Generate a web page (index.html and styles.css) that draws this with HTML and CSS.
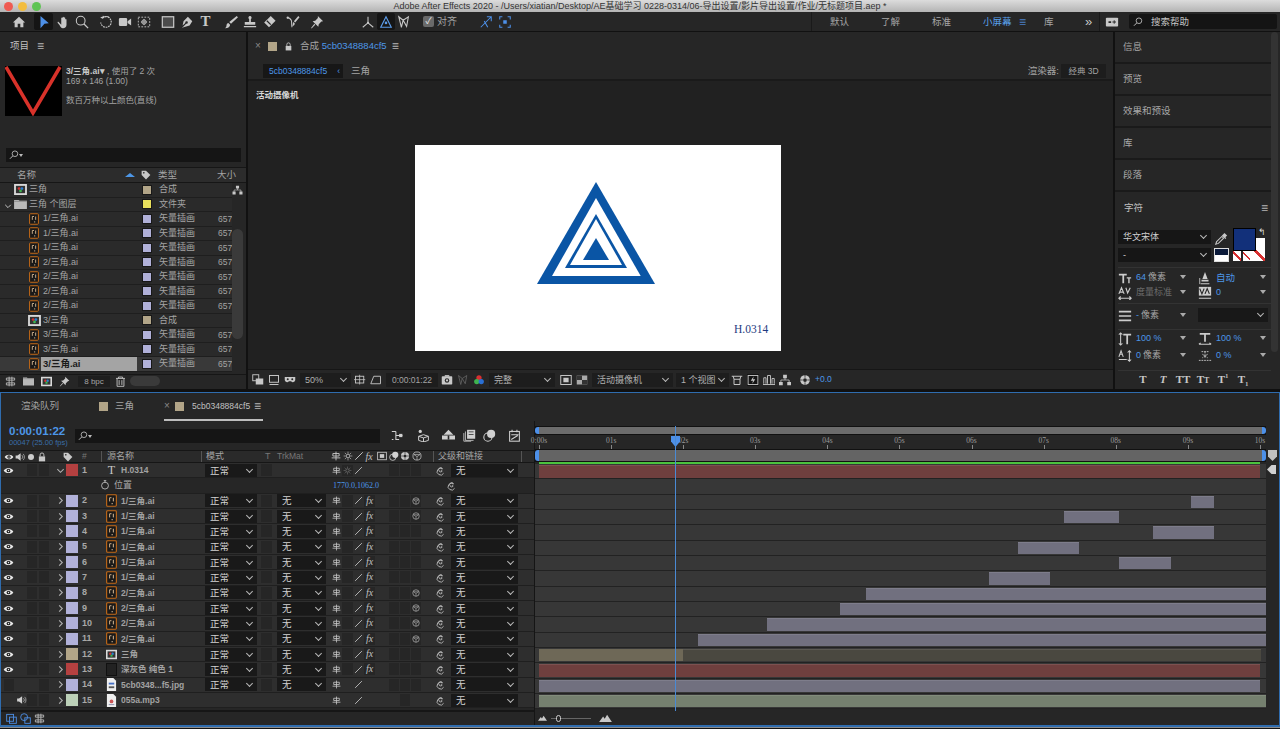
FILE: index.html
```html
<!DOCTYPE html>
<html lang="zh-CN">
<head>
<meta charset="utf-8">
<title>Adobe After Effects 2020</title>
<link rel="stylesheet" href="styles.css">
</head>
<body>
<svg class="defs" aria-hidden="true">
<symbol id="home" viewBox="0 0 16 16"><path fill="currentColor" d="M8 2l7 6.500h-2V14h-3.500v-4h-3v4H3V8.500H1z"/></symbol>
<symbol id="arrow" viewBox="0 0 16 16"><path fill="#4d90e8" d="M4 1l9.500 8.500-5 .5-4.500 5z"/></symbol>
<symbol id="hand" viewBox="0 0 16 16"><path fill="currentColor" d="M3 8l3 3V3.500a.8.800 0 0 1 1.500 0V7V2.500a.8.800 0 0 1 1.500 0V7V3a.8.800 0 0 1 1.500 0v4.500V5a.8.800 0 0 1 1.500 0v6c0 2.500-1.500 4-4 4S5.500 14 4 11.500L2 9c-.5-.8.300-1.600 1-1z"/></symbol>
<symbol id="zoom" viewBox="0 0 16 16"><circle cx="6.500" cy="6.500" r="5" fill="none" stroke="currentColor" stroke-width="1.200"/><path stroke="currentColor" stroke-width="1.500" d="M10 10l5 5"/></symbol>
<symbol id="rot" viewBox="0 0 16 16"><path fill="none" stroke="currentColor" stroke-width="1.300" stroke-dasharray="2 1" d="M4 3.500a6 6 0 1 1-2 5"/><path fill="none" stroke="currentColor" stroke-width="1.300" d="M2 2.500l2 1 1-2.500M4 3.500A6 6 0 0 1 12 3"/></symbol>
<symbol id="cam" viewBox="0 0 16 16"><rect x="1" y="3.500" width="9.500" height="9" rx="1.500" fill="currentColor"/><path fill="currentColor" d="M11 7l4-3v8l-4-3z"/></symbol>
<symbol id="anchor" viewBox="0 0 16 16"><path fill="none" stroke="currentColor" stroke-dasharray="2 1.500" d="M1.500 2.500h13v11h-13z"/><circle cx="8" cy="8" r="2.500" fill="none" stroke="currentColor"/><path stroke="currentColor" d="M8 4.500v7M4.500 8h7"/></symbol>
<symbol id="rect" viewBox="0 0 16 16"><rect x="1.500" y="2" width="13" height="12" fill="#4c4c4c" stroke="currentColor" stroke-width="1.400"/></symbol>
<symbol id="pen" viewBox="0 0 16 16"><path fill="currentColor" d="M9 2l5 5-3 5-7 2-2 1 5-5a1.500 1.500 0 1 0-1-1l-3 3 1-5z"/></symbol>
<symbol id="brush" viewBox="0 0 16 16"><path fill="currentColor" d="M14.500 1L16 2.500 8 10 6 8zM5 9l2 2c0 2-2 4-6 4 2-1 1.500-2 2-4 .3-1 1-2 2-2z"/></symbol>
<symbol id="stamp" viewBox="0 0 16 16"><path fill="currentColor" d="M8 1a2 2 0 0 1 1 3.600V8h5v3H2V8h5V4.600A2 2 0 0 1 8 1zM1 12.500h14V14H1z"/></symbol>
<symbol id="eraser" viewBox="0 0 16 16"><path fill="currentColor" d="M10 1l5.500 5.500L8 14l-5.500-5.500z"/><path fill="#262626" d="M5 7l1-1 4.500 4.500-1 1z"/></symbol>
<symbol id="roto" viewBox="0 0 16 16"><path fill="none" stroke="currentColor" stroke-width="1.200" d="M1 3c2 0 4 1 5 3 1 2 0 6 1 8"/><path fill="currentColor" d="M14 1l1.500 1.500-5 6L9 7zM8.500 8l1.500 1.500c0 2-1 3-3 3 1-1 .5-3 1.500-4.500z"/><circle cx="2" cy="3" r="1.300" fill="currentColor"/></symbol>
<symbol id="pin" viewBox="0 0 16 16"><path fill="currentColor" d="M9 1l6 6-2 .5-3 3-.5 3L3 7l3-.5 3-3zM5 10l1 1-4 4-1 0z"/></symbol>
<symbol id="ax1" viewBox="0 0 16 16"><path fill="none" stroke="currentColor" stroke-width="1.200" d="M8 2v7L2 14M8 9l6 5"/><circle cx="8" cy="9" r="1.300" fill="currentColor"/></symbol>
<symbol id="ax2" viewBox="0 0 16 16"><path fill="none" stroke="#5b9be8" stroke-width="1.300" d="M8 2L2 14h12z"/><circle cx="8" cy="9" r="1.500" fill="#5b9be8"/></symbol>
<symbol id="ax3" viewBox="0 0 16 16"><path fill="none" stroke="currentColor" stroke-width="1.200" d="M2 2l5 4 6-4-2 11-4-7-2 8z"/></symbol>
<symbol id="snap1" viewBox="0 0 16 16"><path fill="none" stroke="#4d90e8" stroke-width="1.200" d="M2 14L14 2M9 2h5v5M6 7l4 7"/></symbol>
<symbol id="snap2" viewBox="0 0 16 16"><path fill="none" stroke="#4d90e8" stroke-width="1.200" d="M2 5V2h3M11 2h3v3M14 11v3h-3M5 14H2v-3"/><rect x="6" y="6" width="4" height="4" fill="#4d90e8"/></symbol>
<symbol id="mag" viewBox="0 0 16 16"><circle cx="9.500" cy="6" r="4.500" fill="none" stroke="currentColor" stroke-width="1.300"/><path stroke="currentColor" stroke-width="1.500" d="M6 9.500L1.500 14"/></symbol>
<symbol id="rpanel" viewBox="0 0 16 16"><rect x="1" y="3" width="14" height="10" rx="1" fill="currentColor"/><path fill="#262626" d="M4 7h3v2H4zM10 6h1v1.500h1.500v1H11V10h-1V8.500H8.500v-1H10z"/></symbol>
<symbol id="ai" viewBox="0 0 12 14"><rect x=".7" y=".7" width="10.600" height="12.600" rx="1" fill="#191919" stroke="#c46a17" stroke-width="1.200"/><path stroke="#e8c8a0" d="M4 8V4l2 0M8 8V4M6 10.500h1.500"/></symbol>
<symbol id="comp" viewBox="0 0 14 12"><rect width="14" height="12" fill="#d9d9d9"/><path fill="#333" d="M2 2h10v8H2z"/><circle cx="5.500" cy="5" r="1.500" fill="#d83030"/><circle cx="8.500" cy="5" r="1.500" fill="#2a7fd4"/><circle cx="7" cy="7.500" r="1.500" fill="#3eb34f"/></symbol>
<symbol id="folder" viewBox="0 0 14 12"><path fill="#b9b9b9" d="M0 1h5l1 1h8v9H0z"/><path fill="#8a8a8a" d="M0 2h14v1H0z"/></symbol>
<symbol id="eye" viewBox="0 0 16 16"><path fill="#e6e6e6" d="M1 8c3-5 11-5 14 0-3 5-11 5-14 0z"/><circle cx="8" cy="8" r="2.700" fill="#222"/><circle cx="8" cy="8" r="1" fill="#e6e6e6"/></symbol>
<symbol id="shy" viewBox="0 0 16 16"><path fill="none" stroke="currentColor" stroke-width="1.400" d="M8 1v14M3 4h10v4H3zM1 11h14"/></symbol>
<symbol id="slash" viewBox="0 0 16 16"><path stroke="currentColor" stroke-width="1.500" d="M2 14L14 2"/></symbol>
<symbol id="cube" viewBox="0 0 16 16"><circle cx="8" cy="8" r="6.500" fill="none" stroke="currentColor" stroke-width="1.200"/><path fill="none" stroke="currentColor" d="M3 5.500h10L8 9zM8 9v5.500"/></symbol>
<symbol id="spiral" viewBox="0 0 16 16"><path fill="none" stroke="currentColor" stroke-width="1.200" d="M8.500 8a1 1 0 1 1 1.500 1.500A3 3 0 1 1 11 5.500 5 5 0 1 0 12.500 12"/></symbol>
<symbol id="doc" viewBox="0 0 12 14"><path fill="#eee" d="M1 0h7l3 3v11H1z"/><path fill="#4671c6" d="M3 5h6v2H3z"/><path fill="#555" d="M3 9h6v2H3z"/></symbol>
<symbol id="mp3" viewBox="0 0 12 14"><path fill="#eee" d="M1 0h7l3 3v11H1z"/><circle cx="6" cy="8" r="2" fill="#c55"/><path fill="#88a" d="M3 11h6v1H3z"/></symbol>
<symbol id="speaker" viewBox="0 0 16 16"><path fill="#d0d0d0" d="M1 5.500h3L9 2v12l-5-3.500H1z"/><path fill="none" stroke="#d0d0d0" d="M11 5a4 4 0 0 1 0 6M13 3a7 7 0 0 1 0 10"/></symbol>
<symbol id="lock" viewBox="0 0 16 16"><rect x="3" y="7" width="10" height="8" fill="currentColor"/><path fill="none" stroke="currentColor" stroke-width="1.500" d="M5 7V4.500a3 3 0 0 1 6 0V7"/></symbol>
<symbol id="trash" viewBox="0 0 16 16"><path fill="none" stroke="currentColor" stroke-width="1.300" d="M1.500 3.500h13M5 3.500V1.500h6v2M3 3.500V15h10V3.500M6 6v7M10 6v7"/></symbol>
<symbol id="tag" viewBox="0 0 16 16"><path fill="currentColor" d="M1 1h7l7 7-7 7-7-7z"/><circle cx="4.500" cy="4.500" r="1.300" fill="#262626"/></symbol>
<symbol id="sun" viewBox="0 0 16 16"><circle cx="8" cy="8" r="3" fill="none" stroke="currentColor" stroke-width="1.300"/><path stroke="currentColor" d="M8 1v3M8 12v3M1 8h3M12 8h3M3 3l2 2M11 11l2 2M13 3l-2 2M5 11l-2 2"/></symbol>
<symbol id="stop" viewBox="0 0 16 16"><circle cx="8" cy="9" r="5.500" fill="none" stroke="currentColor" stroke-width="1.300"/><path stroke="currentColor" stroke-width="1.300" d="M8 1v3M6 1h4"/></symbol>
<symbol id="chevd" viewBox="0 0 10 10"><path fill="none" stroke="currentColor" stroke-width="1.200" d="M1.500 3.500L5 7l3.500-3.500"/></symbol>
<symbol id="chevr" viewBox="0 0 10 10"><path fill="none" stroke="currentColor" stroke-width="1.200" d="M3.500 1.500L7 5 3.500 8.500"/></symbol>
<symbol id="net" viewBox="0 0 16 16"><path fill="currentColor" d="M5.500 1h5v4.500h-5zM0 10.500h5V15H0zM11 10.500h5V15h-5z"/><path fill="none" stroke="currentColor" d="M8 5v3M2.500 11V8h11v3"/></symbol>
<symbol id="grid2" viewBox="0 0 16 16"><rect x="1" y="1" width="8" height="8" fill="none" stroke="currentColor" stroke-width="1.200"/><rect x="5" y="6" width="10" height="8" fill="currentColor"/></symbol>
<symbol id="mon" viewBox="0 0 16 16"><rect x="2" y="2" width="12" height="9" fill="none" stroke="currentColor" stroke-width="1.300"/><path stroke="currentColor" stroke-width="1.300" d="M2 14h12"/></symbol>
<symbol id="mask" viewBox="0 0 16 16"><path fill="currentColor" d="M1 4h14v4a3 3 0 0 1-5.500 1.500h-3A3 3 0 0 1 1 8z"/><circle cx="5" cy="7" r="1.300" fill="#262626"/><circle cx="11" cy="7" r="1.300" fill="#262626"/></symbol>
<symbol id="crop" viewBox="0 0 16 16"><rect x="2" y="3" width="11" height="9" fill="none" stroke="currentColor" stroke-width="1.200"/><path stroke="currentColor" d="M7.500 1v13M0 7.500h15"/></symbol>
<symbol id="trap" viewBox="0 0 16 16"><path fill="none" stroke="currentColor" stroke-width="1.200" d="M5 3h9v10H1z"/></symbol>
<symbol id="snap" viewBox="0 0 16 16"><rect x="1" y="3" width="14" height="11" rx="1" fill="currentColor"/><rect x="5" y="1.500" width="6" height="2" fill="currentColor"/><circle cx="8" cy="8.500" r="3" fill="#262626"/><circle cx="8" cy="8.500" r="1.500" fill="currentColor"/></symbol>
<symbol id="rgb" viewBox="0 0 16 16"><circle cx="8" cy="5" r="3.500" fill="#d83030"/><circle cx="5" cy="10" r="3.500" fill="#3eb34f"/><circle cx="11" cy="10" r="3.500" fill="#2a6fd4"/></symbol>
<symbol id="fr" viewBox="0 0 16 16"><rect x="1" y="2" width="14" height="12" fill="none" stroke="currentColor" stroke-width="1.300"/><rect x="4.500" y="5" width="7" height="6" fill="currentColor"/></symbol>
<symbol id="chk" viewBox="0 0 16 16"><path fill="#aaa" d="M1 2h14v12H1z"/><path fill="#333" d="M1 2h7v6H1zM8 8h7v6H8z"/></symbol>
<symbol id="vw" viewBox="0 0 16 16"><path fill="none" stroke="currentColor" stroke-width="1.300" d="M1 3h14M3 3l1 4h8l1-4M4 14h8M4 7v7M12 7v7"/></symbol>
<symbol id="fast" viewBox="0 0 16 16"><rect x="1.500" y="2" width="13" height="12" fill="none" stroke="currentColor" stroke-width="1.200"/><path fill="currentColor" d="M9 3L5 9h3l-1 4 4-6H8z"/></symbol>
<symbol id="tl" viewBox="0 0 16 16"><path fill="none" stroke="currentColor" stroke-width="1.200" d="M1 13V5h3v8M6 13V2h4v11M12 13V6h3v7M0 14h16"/></symbol>
<symbol id="aper" viewBox="0 0 16 16"><circle cx="8" cy="8" r="6.500" fill="currentColor"/><circle cx="8" cy="8" r="2.500" fill="#262626"/><path stroke="#262626" d="M8 1v4M15 8h-4M8 15v-4M1 8h4"/></symbol>
<symbol id="sw1" viewBox="0 0 16 16"><path fill="none" stroke="#d0d0d0" stroke-width="1.300" d="M1 3h5M6 3v10h4M6 8h8M1 13h2"/><rect x="10" y="6" width="4" height="4" fill="#d0d0d0"/></symbol>
<symbol id="sw2" viewBox="0 0 16 16"><path fill="none" stroke="#d0d0d0" stroke-width="1.200" d="M8 7l6 2v5l-6 2-6-2V9zM2 9l6 2 6-2M8 11v5"/><circle cx="4" cy="3" r="2" fill="#d0d0d0"/></symbol>
<symbol id="sw3" viewBox="0 0 16 16"><path fill="#d0d0d0" d="M8 1l6 6H2zM0 8h16v5H0z"/><rect x="7" y="8" width="2" height="5" fill="#262626"/></symbol>
<symbol id="sw4" viewBox="0 0 16 16"><path fill="#d0d0d0" d="M5 1h10v11H5z"/><path fill="none" stroke="#d0d0d0" d="M3 3v11h10M1 5v10h9"/><path fill="#262626" d="M7 3h6v1H7zM7 6h6v1H7z"/></symbol>
<symbol id="sw5" viewBox="0 0 16 16"><circle cx="10" cy="6" r="5" fill="#d0d0d0"/><circle cx="6" cy="10" r="5" fill="none" stroke="#d0d0d0" stroke-width="1.300"/></symbol>
<symbol id="sw6" viewBox="0 0 16 16"><rect x="2" y="3" width="12" height="12" fill="none" stroke="#d0d0d0" stroke-width="1.300"/><path stroke="#d0d0d0" stroke-width="1.300" d="M5 1v3M11 1v3M4 7h9M4 13l8-5"/></symbol>
<symbol id="mtn" viewBox="0 0 16 10"><path fill="currentColor" d="M0 10l5-7 2 3 3-5 6 9z"/></symbol>
<symbol id="mt2" viewBox="0 0 16 16"><rect x="1" y="2" width="10" height="10" fill="none" stroke="#4d90e8" stroke-width="1.300"/><rect x="5" y="6" width="10" height="9" fill="none" stroke="#4d90e8" stroke-width="1.300"/></symbol>
<symbol id="mt3" viewBox="0 0 16 16"><circle cx="6" cy="6" r="5" fill="none" stroke="#4d90e8" stroke-width="1.300"/><rect x="7" y="7" width="8" height="8" fill="none" stroke="#4d90e8" stroke-width="1.300"/></symbol>
<symbol id="mt4" viewBox="0 0 16 16"><path fill="none" stroke="#bbb" stroke-width="1.300" d="M2 3h12v3H2zM2 10h12v3H2zM6 1v14M10 1v14"/></symbol>
<symbol id="drop" viewBox="0 0 16 16"><path fill="none" stroke="currentColor" stroke-width="1.200" d="M3 11l6-6 2 2-6 6-3 1z"/><path fill="currentColor" d="M10 3l2-2 3 3-2 2 1 1-1 1-4-4 1-1z"/></symbol>
<symbol id="ct1" viewBox="0 0 16 16"><path fill="#ccc" d="M1 3h9v2H7v9H5V5H1zM10 7h5v1.500h-1.700V14h-1.600V8.500H10z"/></symbol>
<symbol id="ct2" viewBox="0 0 16 16"><path fill="#ccc" d="M8 1l3 8H5zM4 10h8v2H4zM3 14h10v1H3z"/><path stroke="#ccc" d="M2 8v7"/></symbol>
<symbol id="ct3" viewBox="0 0 16 16"><path fill="none" stroke="#ccc" stroke-width="1.300" d="M1 9l3-7 3 7M2 7h4M9 2l2 6 3-6M1 14h14M3 12l-2 2 2 2M13 12l2 2-2 2"/></symbol>
<symbol id="ct4" viewBox="0 0 16 16"><rect x="1" y="1" width="14" height="10" fill="#ccc"/><path fill="none" stroke="#222" stroke-width="1.300" d="M2 3l2.500 6L7 3M8 9l2.500-6L13 9"/><path stroke="#ccc" stroke-width="1.200" d="M1 14h14"/></symbol>
<symbol id="ct5" viewBox="0 0 16 16"><path stroke="#ccc" stroke-width="1.800" d="M1 3h14M1 8h14M1 13h14"/></symbol>
<symbol id="ct6" viewBox="0 0 16 16"><path fill="#ccc" d="M6 2h9v2h-3.500v10h-2V4H6z"/><path stroke="#ccc" stroke-width="1.200" d="M3 1v14M1 3l2-2 2 2M1 13l2 2 2-2"/></symbol>
<symbol id="ct7" viewBox="0 0 16 16"><path fill="#ccc" d="M2 1h12v2H9v8H7V3H2z"/><path stroke="#ccc" stroke-width="1.200" d="M1 14h14M1 14l2-1.500M15 14l-2-1.500"/></symbol>
<symbol id="ct8" viewBox="0 0 16 16"><path fill="none" stroke="#ccc" stroke-width="1.200" d="M1 9l2.500-7L6 9M2 6h3M1 12h9M13 2v12M11 4l2-2 2 2M11 12l2 2 2-2"/></symbol>
<symbol id="ct9" viewBox="0 0 16 16"><path fill="none" stroke="#ccc" d="M4 3h8M8 3v7M5 6l6 4M11 6l-6 4M1 13h14" stroke-dasharray="2 1"/></symbol>
</svg>

<div class="app">
<header class="titlebar">
  <span class="lights"><i class="l r"></i><i class="l y"></i><i class="l g"></i></span>
  <span class="title">Adobe After Effects 2020 - /Users/xiatian/Desktop/AE基础学习 0228-0314/06-导出设置/影片导出设置/作业/无标题项目.aep *</span>
</header>

<nav class="toolbar">
  <span class="tool t-home"><svg><use href="#home"/></svg></span>
  <span class="tool on m6"><svg><use href="#arrow"/></svg></span>
  <span class="tool"><svg><use href="#hand"/></svg></span>
  <span class="tool"><svg><use href="#zoom"/></svg></span>
  <span class="tool m5"><svg><use href="#rot"/></svg></span>
  <span class="tool"><svg><use href="#cam"/></svg></span>
  <span class="tool"><svg><use href="#anchor"/></svg></span>
  <span class="tool m5"><svg><use href="#rect"/></svg></span>
  <span class="tool"><svg><use href="#pen"/></svg></span>
  <span class="tool ttext">T</span>
  <span class="tool m6"><svg><use href="#brush"/></svg></span>
  <span class="tool"><svg><use href="#stamp"/></svg></span>
  <span class="tool"><svg><use href="#eraser"/></svg></span>
  <span class="tool m5"><svg><use href="#roto"/></svg></span>
  <span class="tool m5"><svg><use href="#pin"/></svg></span>
  <span class="tool ax m33"><svg><use href="#ax1"/></svg></span>
  <span class="tool ax on"><svg><use href="#ax2"/></svg></span>
  <span class="tool ax"><svg><use href="#ax3"/></svg></span>
  <span class="snapchk"><i class="cb">✓</i>对齐</span>
  <span class="tool snapa"><svg><use href="#snap1"/></svg></span>
  <span class="tool"><svg><use href="#snap2"/></svg></span>
  <span class="flex1"></span>
  <div class="workspaces">
    <span class="ws w1">默认</span><span class="ws w2">了解</span><span class="ws w3">标准</span>
    <span class="ws w4 act">小屏幕</span><span class="menu blue">≡</span><span class="ws w5">库</span>
    <span class="more">»</span>
  </div>
  <span class="tool rp"><svg><use href="#rpanel"/></svg></span>
  <span class="helpbox"><svg><use href="#mag"/></svg>搜索帮助</span>
</nav>

<main class="main">
  <section class="project">
    <div class="phead"><span>项目</span><span class="menu">≡</span></div>
    <div class="pinfo">
      <div class="thumb"><svg viewBox="0 0 57 50"><path fill="none" stroke="#d8322a" stroke-width="3.500" d="M1 1l27 46L55 1"/></svg></div>
      <div class="pmeta"><p class="m1"><b>3/三角.ai▾</b> , 使用了 2 次</p><p>169 x 146 (1.00)</p><p class="m3">数百万种以上颜色(直线)</p></div>
    </div>
    <div class="psearch"><svg><use href="#mag"/></svg><i class="dn"></i></div>
    <div class="pcols"><span class="pc1">名称</span><i class="uptri"></i><svg class="ptag"><use href="#tag"/></svg><span class="pc2">类型</span><span class="pc3">大小</span></div>
    <div class="pbody">
      <div class="plist">
        <div class="prow"><span class="pname"><svg class="ci"><use href="#comp"/></svg>三角</span><i class="lab tan"></i><span class="ptype">合成</span></div>
        <div class="prow"><span class="pname"><svg class="fchev"><use href="#chevd"/></svg><svg class="ci"><use href="#folder"/></svg>三角 个图层</span><i class="lab yel"></i><span class="ptype">文件夹</span></div>
        <div class="prow"><span class="pname in"><svg class="ic"><use href="#ai"/></svg>1/三角.ai</span><i class="lab vec"></i><span class="ptype">矢量插画</span><span class="psize">657</span></div>
        <div class="prow"><span class="pname in"><svg class="ic"><use href="#ai"/></svg>1/三角.ai</span><i class="lab vec"></i><span class="ptype">矢量插画</span><span class="psize">657</span></div>
        <div class="prow"><span class="pname in"><svg class="ic"><use href="#ai"/></svg>1/三角.ai</span><i class="lab vec"></i><span class="ptype">矢量插画</span><span class="psize">657</span></div>
        <div class="prow"><span class="pname in"><svg class="ic"><use href="#ai"/></svg>2/三角.ai</span><i class="lab vec"></i><span class="ptype">矢量插画</span><span class="psize">657</span></div>
        <div class="prow"><span class="pname in"><svg class="ic"><use href="#ai"/></svg>2/三角.ai</span><i class="lab vec"></i><span class="ptype">矢量插画</span><span class="psize">657</span></div>
        <div class="prow"><span class="pname in"><svg class="ic"><use href="#ai"/></svg>2/三角.ai</span><i class="lab vec"></i><span class="ptype">矢量插画</span><span class="psize">657</span></div>
        <div class="prow"><span class="pname in"><svg class="ic"><use href="#ai"/></svg>2/三角.ai</span><i class="lab vec"></i><span class="ptype">矢量插画</span><span class="psize">657</span></div>
        <div class="prow"><span class="pname in"><svg class="ci cin"><use href="#comp"/></svg>3/三角</span><i class="lab tan"></i><span class="ptype">合成</span></div>
        <div class="prow"><span class="pname in"><svg class="ic"><use href="#ai"/></svg>3/三角.ai</span><i class="lab vec"></i><span class="ptype">矢量插画</span><span class="psize">657</span></div>
        <div class="prow"><span class="pname in"><svg class="ic"><use href="#ai"/></svg>3/三角.ai</span><i class="lab vec"></i><span class="ptype">矢量插画</span><span class="psize">657</span></div>
        <div class="prow sel-row"><span class="pname in"><svg class="ic"><use href="#ai"/></svg><b class="edit">3/三角.ai</b></span><i class="lab vec"></i><span class="ptype">矢量插画</span><span class="psize">657</span></div>
      </div>
      <div class="pscroll"><svg class="netic"><use href="#net"/></svg><i class="thumbbar"></i></div>
    </div>
    <div class="pfoot">
      <svg class="fi"><use href="#mt4"/></svg><svg class="fi"><use href="#folder"/></svg><svg class="fi"><use href="#comp"/></svg><svg class="fi"><use href="#pin"/></svg>
      <span class="bpc">8 bpc</span><svg class="fi trash"><use href="#trash"/></svg><i class="pill"></i>
    </div>
  </section>

  <section class="center">
    <div class="ctabs"><span class="x">×</span><i class="swatch tan"></i><svg class="clock"><use href="#lock"/></svg><span class="ctab">合成 <span class="blue">5cb0348884cf5</span></span><span class="menu">≡</span></div>
    <div class="crumbs"><span class="crumb blue">5cb0348884cf5<em>‹</em></span><span class="crumb2">三角</span><span class="flex1"></span><span>渲染器:</span><span class="renderer">经典 3D</span></div>
    <div class="viewer">
      <div class="vlabel">活动摄像机</div>
      <div class="comp">
        <svg viewBox="0 0 366 206"><path fill="#0a55a5" d="M181 37l59 102H122z"/><path fill="#fff" d="M181 53l44.700 78H137z"/><path fill="#0a55a5" d="M181 69l31 54H150z"/><path fill="#fff" d="M181 74l26 46H155z"/><path fill="#0a55a5" d="M181 93l13 22h-26z"/></svg>
        <span class="hmark">H.0314</span>
      </div>
    </div>
    <div class="vbar">
      <svg class="vi a1"><use href="#grid2"/></svg><svg class="vi"><use href="#mon"/></svg><svg class="vi"><use href="#mask"/></svg>
      <span class="vsel v50">50%</span>
      <svg class="vi"><use href="#crop"/></svg><svg class="vi"><use href="#trap"/></svg>
      <span class="vtime">0:00:01:22</span>
      <svg class="vi a3"><use href="#snap"/></svg><svg class="vi dim"><use href="#ax3"/></svg><svg class="vi"><use href="#rgb"/></svg>
      <span class="vsel vq">完整</span>
      <svg class="vi a4"><use href="#fr"/></svg><svg class="vi"><use href="#chk"/></svg>
      <span class="vsel vc">活动摄像机</span><span class="vsel vv">1 个视图</span>
      <svg class="vi a5"><use href="#vw"/></svg><svg class="vi on"><use href="#fast"/></svg><svg class="vi"><use href="#tl"/></svg><svg class="vi"><use href="#net"/></svg>
      <svg class="vi a6"><use href="#aper"/></svg><span class="blue exp">+0.0</span>
    </div>
  </section>

  <aside class="right">
    <div class="rlist">
      <div class="rrow">信息</div><div class="rrow">预览</div><div class="rrow">效果和预设</div><div class="rrow">库</div><div class="rrow">段落</div>
      <div class="char">
        <div class="charhead"><span>字符</span><span class="menu">≡</span></div>
        <div class="fontrow">
          <div class="fontsel"><span class="fs f1">华文宋体</span><span class="fs f2">-</span></div>
          <svg class="dropper"><use href="#drop"/></svg>
          <div class="swatches">
            <i class="mini"></i>
            <i class="stroke"></i><i class="nostroke n1"></i><i class="nostroke n2"></i><i class="fill"></i><span class="swap">↰</span>
          </div>
        </div>
        <div class="cgrid g1">
          <div class="cc"><svg><use href="#ct1"/></svg><span class="blue">64</span> 像素<i class="tri"></i></div>
          <div class="cc"><svg><use href="#ct2"/></svg><span class="blue big">自动</span><i class="tri"></i></div>
          <div class="cc off"><svg><use href="#ct3"/></svg>度量标准<i class="tri"></i></div>
          <div class="cc"><svg><use href="#ct4"/></svg><span class="blue">0</span><i class="tri"></i></div>
        </div>
        <div class="cgrid g2">
          <div class="cc"><svg><use href="#ct5"/></svg><span class="blue">-</span> 像素<i class="tri"></i></div>
          <div class="ccsel"></div>
        </div>
        <div class="cgrid g3">
          <div class="cc"><svg><use href="#ct6"/></svg><span class="blue">100 %</span><i class="tri"></i></div>
          <div class="cc"><svg><use href="#ct7"/></svg><span class="blue">100 %</span><i class="tri"></i></div>
          <div class="cc"><svg><use href="#ct8"/></svg><span class="blue">0</span> 像素<i class="tri"></i></div>
          <div class="cc"><svg><use href="#ct9"/></svg><span class="blue">0 %</span><i class="tri"></i></div>
        </div>
        <div class="tstyles"><span>T</span><span class="ital">T</span><span>TT</span><span>T<small>T</small></span><span>T<sup>1</sup></span><span>T<sub>1</sub></span></div>
      </div>
    </div>
    <div class="rscroll"><i></i></div>
  </aside>
</main>

<section class="timeline">
  <div class="ttabs">
    <span class="tt t0">渲染队列</span>
    <i class="swatch tan t1"></i><span class="tt t1b">三角</span>
    <span class="tt-act"><span class="x">×</span><i class="swatch tan"></i><span class="tt t2">5cb0348884cf5</span><span class="menu">≡</span></span>
  </div>
  <div class="tbody">
    <div class="tleft">
      <div class="tctrl">
        <div class="ttime"><b>0:00:01:22</b><span>00047 (25.00 fps)</span></div>
        <div class="tsearch"><svg><use href="#mag"/></svg><i class="dn"></i></div>
        <div class="ticons"><svg><use href="#sw1"/></svg><svg><use href="#sw2"/></svg><svg><use href="#sw3"/></svg><svg><use href="#sw4"/></svg><svg><use href="#sw5"/></svg><svg><use href="#sw6"/></svg></div>
      </div>
      <div class="thead">
        <span class="h eye"><svg><use href="#eye"/></svg></span><span class="h au"><svg><use href="#speaker"/></svg></span><span class="h so"><i class="dot"></i></span><span class="h lo"><svg><use href="#lock"/></svg></span>
        <span class="h tg"><svg><use href="#tag"/></svg></span><span class="h ha">#</span><span class="h hn">源名称</span><span class="h hm">模式</span><span class="h ht">T</span><span class="h hk">TrkMat</span>
        <span class="h hs"><svg><use href="#shy"/></svg><svg><use href="#sun"/></svg><svg><use href="#slash"/></svg><em class="fx">fx</em><svg><use href="#fr"/></svg><svg><use href="#sw5"/></svg><svg><use href="#aper"/></svg><svg><use href="#cube"/></svg></span>
        <span class="h hp">父级和链接</span>
      </div>

      <div class="lay top"><span class="c1"><svg><use href="#eye"/></svg></span><i class="c2"></i><i class="bx"></i><i class="bx"></i><svg class="chev"><use href="#chevd"/></svg><i class="lb red"></i><b class="num">1</b><span class="src tglyph">T</span><span class="nm">H.0314</span><span class="sel md">正常</span><i class="tb"></i><span class="trk"></span><span class="sws"><svg class="s on"><use href="#shy"/></svg><svg class="s on dimg"><use href="#sun"/></svg><svg class="s"><use href="#slash"/></svg><i class="s"></i></span><span class="bxs"><i class="bx"></i><i class="bx"></i><i class="bx"></i></span><svg class="sp"><use href="#spiral"/></svg><span class="sel pr">无</span></div>
      <div class="lay sub"><svg class="stp"><use href="#stop"/></svg><span class="subn">位置</span><span class="subv">1770.0,1062.0</span><svg class="sp2"><use href="#spiral"/></svg></div>

      <div class="lay"><span class="c1"><svg><use href="#eye"/></svg></span><i class="c2"></i><i class="bx"></i><i class="bx"></i><svg class="chev"><use href="#chevr"/></svg><i class="lb vec"></i><b class="num">2</b><svg class="src"><use href="#ai"/></svg><span class="nm">1/三角.ai</span><span class="sel md">正常</span><i class="tb"></i><span class="sel trk">无</span><span class="sws"><svg class="s on"><use href="#shy"/></svg><i class="s bg"></i><svg class="s"><use href="#slash"/></svg><em class="s fx">fx</em></span><span class="bxs"><i class="bx"></i><i class="bx"></i><svg class="bx"><use href="#cube"/></svg></span><svg class="sp"><use href="#spiral"/></svg><span class="sel pr">无</span></div>
      <div class="lay"><span class="c1"><svg><use href="#eye"/></svg></span><i class="c2"></i><i class="bx"></i><i class="bx"></i><svg class="chev"><use href="#chevr"/></svg><i class="lb vec"></i><b class="num">3</b><svg class="src"><use href="#ai"/></svg><span class="nm">1/三角.ai</span><span class="sel md">正常</span><i class="tb"></i><span class="sel trk">无</span><span class="sws"><svg class="s on"><use href="#shy"/></svg><i class="s bg"></i><svg class="s"><use href="#slash"/></svg><em class="s fx">fx</em></span><span class="bxs"><i class="bx"></i><i class="bx"></i><svg class="bx"><use href="#cube"/></svg></span><svg class="sp"><use href="#spiral"/></svg><span class="sel pr">无</span></div>
      <div class="lay"><span class="c1"><svg><use href="#eye"/></svg></span><i class="c2"></i><i class="bx"></i><i class="bx"></i><svg class="chev"><use href="#chevr"/></svg><i class="lb vec"></i><b class="num">4</b><svg class="src"><use href="#ai"/></svg><span class="nm">1/三角.ai</span><span class="sel md">正常</span><i class="tb"></i><span class="sel trk">无</span><span class="sws"><svg class="s on"><use href="#shy"/></svg><i class="s bg"></i><svg class="s"><use href="#slash"/></svg><em class="s fx">fx</em></span><span class="bxs"><i class="bx"></i><i class="bx"></i><i class="bx"></i></span><svg class="sp"><use href="#spiral"/></svg><span class="sel pr">无</span></div>
      <div class="lay"><span class="c1"><svg><use href="#eye"/></svg></span><i class="c2"></i><i class="bx"></i><i class="bx"></i><svg class="chev"><use href="#chevr"/></svg><i class="lb vec"></i><b class="num">5</b><svg class="src"><use href="#ai"/></svg><span class="nm">1/三角.ai</span><span class="sel md">正常</span><i class="tb"></i><span class="sel trk">无</span><span class="sws"><svg class="s on"><use href="#shy"/></svg><i class="s bg"></i><svg class="s"><use href="#slash"/></svg><em class="s fx">fx</em></span><span class="bxs"><i class="bx"></i><i class="bx"></i><i class="bx"></i></span><svg class="sp"><use href="#spiral"/></svg><span class="sel pr">无</span></div>
      <div class="lay"><span class="c1"><svg><use href="#eye"/></svg></span><i class="c2"></i><i class="bx"></i><i class="bx"></i><svg class="chev"><use href="#chevr"/></svg><i class="lb vec"></i><b class="num">6</b><svg class="src"><use href="#ai"/></svg><span class="nm">1/三角.ai</span><span class="sel md">正常</span><i class="tb"></i><span class="sel trk">无</span><span class="sws"><svg class="s on"><use href="#shy"/></svg><i class="s bg"></i><svg class="s"><use href="#slash"/></svg><em class="s fx">fx</em></span><span class="bxs"><i class="bx"></i><i class="bx"></i><i class="bx"></i></span><svg class="sp"><use href="#spiral"/></svg><span class="sel pr">无</span></div>
      <div class="lay"><span class="c1"><svg><use href="#eye"/></svg></span><i class="c2"></i><i class="bx"></i><i class="bx"></i><svg class="chev"><use href="#chevr"/></svg><i class="lb vec"></i><b class="num">7</b><svg class="src"><use href="#ai"/></svg><span class="nm">1/三角.ai</span><span class="sel md">正常</span><i class="tb"></i><span class="sel trk">无</span><span class="sws"><svg class="s on"><use href="#shy"/></svg><i class="s bg"></i><svg class="s"><use href="#slash"/></svg><em class="s fx">fx</em></span><span class="bxs"><i class="bx"></i><i class="bx"></i><i class="bx"></i></span><svg class="sp"><use href="#spiral"/></svg><span class="sel pr">无</span></div>
      <div class="lay"><span class="c1"><svg><use href="#eye"/></svg></span><i class="c2"></i><i class="bx"></i><i class="bx"></i><svg class="chev"><use href="#chevr"/></svg><i class="lb vec"></i><b class="num">8</b><svg class="src"><use href="#ai"/></svg><span class="nm">2/三角.ai</span><span class="sel md">正常</span><i class="tb"></i><span class="sel trk">无</span><span class="sws"><svg class="s on"><use href="#shy"/></svg><i class="s bg"></i><svg class="s"><use href="#slash"/></svg><em class="s fx">fx</em></span><span class="bxs"><i class="bx"></i><i class="bx"></i><svg class="bx"><use href="#cube"/></svg></span><svg class="sp"><use href="#spiral"/></svg><span class="sel pr">无</span></div>
      <div class="lay"><span class="c1"><svg><use href="#eye"/></svg></span><i class="c2"></i><i class="bx"></i><i class="bx"></i><svg class="chev"><use href="#chevr"/></svg><i class="lb vec"></i><b class="num">9</b><svg class="src"><use href="#ai"/></svg><span class="nm">2/三角.ai</span><span class="sel md">正常</span><i class="tb"></i><span class="sel trk">无</span><span class="sws"><svg class="s on"><use href="#shy"/></svg><i class="s bg"></i><svg class="s"><use href="#slash"/></svg><em class="s fx">fx</em></span><span class="bxs"><i class="bx"></i><i class="bx"></i><svg class="bx"><use href="#cube"/></svg></span><svg class="sp"><use href="#spiral"/></svg><span class="sel pr">无</span></div>
      <div class="lay"><span class="c1"><svg><use href="#eye"/></svg></span><i class="c2"></i><i class="bx"></i><i class="bx"></i><svg class="chev"><use href="#chevr"/></svg><i class="lb vec"></i><b class="num">10</b><svg class="src"><use href="#ai"/></svg><span class="nm">2/三角.ai</span><span class="sel md">正常</span><i class="tb"></i><span class="sel trk">无</span><span class="sws"><svg class="s on"><use href="#shy"/></svg><i class="s bg"></i><svg class="s"><use href="#slash"/></svg><em class="s fx">fx</em></span><span class="bxs"><i class="bx"></i><i class="bx"></i><svg class="bx"><use href="#cube"/></svg></span><svg class="sp"><use href="#spiral"/></svg><span class="sel pr">无</span></div>
      <div class="lay"><span class="c1"><svg><use href="#eye"/></svg></span><i class="c2"></i><i class="bx"></i><i class="bx"></i><svg class="chev"><use href="#chevr"/></svg><i class="lb vec"></i><b class="num">11</b><svg class="src"><use href="#ai"/></svg><span class="nm">2/三角.ai</span><span class="sel md">正常</span><i class="tb"></i><span class="sel trk">无</span><span class="sws"><svg class="s on"><use href="#shy"/></svg><i class="s bg"></i><svg class="s"><use href="#slash"/></svg><em class="s fx">fx</em></span><span class="bxs"><i class="bx"></i><i class="bx"></i><svg class="bx"><use href="#cube"/></svg></span><svg class="sp"><use href="#spiral"/></svg><span class="sel pr">无</span></div>
      <div class="lay"><span class="c1"><svg><use href="#eye"/></svg></span><i class="c2"></i><i class="bx"></i><i class="bx"></i><svg class="chev"><use href="#chevr"/></svg><i class="lb tan"></i><b class="num">12</b><svg class="src"><use href="#comp"/></svg><span class="nm">三角</span><span class="sel md">正常</span><i class="tb"></i><span class="sel trk">无</span><span class="sws"><svg class="s on"><use href="#shy"/></svg><i class="s bg"></i><svg class="s"><use href="#slash"/></svg><em class="s fx">fx</em></span><span class="bxs"><i class="bx"></i><i class="bx"></i><i class="bx"></i></span><svg class="sp"><use href="#spiral"/></svg><span class="sel pr">无</span></div>
      <div class="lay"><span class="c1"><svg><use href="#eye"/></svg></span><i class="c2"></i><i class="bx"></i><i class="bx"></i><svg class="chev"><use href="#chevr"/></svg><i class="lb red"></i><b class="num">13</b><i class="src solid"></i><span class="nm">深灰色 纯色 1</span><span class="sel md">正常</span><i class="tb"></i><span class="sel trk">无</span><span class="sws"><svg class="s on"><use href="#shy"/></svg><i class="s bg"></i><svg class="s"><use href="#slash"/></svg><em class="s fx">fx</em></span><span class="bxs"><i class="bx"></i><i class="bx"></i><i class="bx"></i></span><svg class="sp"><use href="#spiral"/></svg><span class="sel pr">无</span></div>
      <div class="lay"><i class="c1 bxc"></i><i class="c2"></i><i class="bx hid"></i><i class="bx"></i><svg class="chev"><use href="#chevr"/></svg><i class="lb vec"></i><b class="num">14</b><svg class="src"><use href="#doc"/></svg><span class="nm">5cb0348...f5.jpg</span><span class="sel md">正常</span><i class="tb"></i><span class="sel trk">无</span><span class="sws"><svg class="s on"><use href="#shy"/></svg><i class="s"></i><svg class="s"><use href="#slash"/></svg><i class="s"></i></span><span class="bxs"><i class="bx"></i><i class="bx"></i><i class="bx"></i></span><svg class="sp"><use href="#spiral"/></svg><span class="sel pr">无</span></div>
      <div class="lay"><i class="c1"></i><svg class="c2 spk"><use href="#speaker"/></svg><i class="bx"></i><i class="bx"></i><svg class="chev"><use href="#chevr"/></svg><i class="lb grn"></i><b class="num">15</b><svg class="src"><use href="#mp3"/></svg><span class="nm">055a.mp3</span><i class="md"></i><i class="tb hid"></i><span class="trk"></span><span class="sws"><svg class="s on"><use href="#shy"/></svg><i class="s"></i><svg class="s"><use href="#slash"/></svg><i class="s"></i></span><span class="bxs"><i class="bx hid"></i><i class="bx"></i><i class="bx hid"></i></span><svg class="sp"><use href="#spiral"/></svg><span class="sel pr">无</span></div>

      <div class="tfoot"><svg><use href="#mt2"/></svg><svg><use href="#mt3"/></svg><svg><use href="#mt4"/></svg></div>
    </div>

    <div class="tright">
      <div class="nav"><i class="cap"></i><i class="navline"></i><i class="cap"></i></div>
      <div class="ruler">
        <span class="mk"><b>0:00s</b></span><span class="mk"><b>01s</b></span><span class="mk"><b>02s</b></span><span class="mk"><b>03s</b></span><span class="mk"><b>04s</b></span><span class="mk"><b>05s</b></span><span class="mk"><b>06s</b></span><span class="mk"><b>07s</b></span><span class="mk"><b>08s</b></span><span class="mk"><b>09s</b></span><span class="mk"><b>10s</b></span>
      </div>
      <div class="work"><i class="cap"></i><i class="workfill"></i><i class="cap"></i><i class="shield"></i></div>
      <div class="green"></div>
      <div class="tracks">
        <div class="trackrow"><div class="bar c-red" style="margin-left:4px;width:721px"></div></div>
        <div class="trackrow"></div>
        <div class="trackrow"><div class="bar c-vec" style="margin-left:656px;width:23px"></div></div>
        <div class="trackrow"><div class="bar c-vec" style="margin-left:529px;width:55px"></div></div>
        <div class="trackrow"><div class="bar c-vec" style="margin-left:618px;width:61px"></div></div>
        <div class="trackrow"><div class="bar c-vec" style="margin-left:483px;width:61px"></div></div>
        <div class="trackrow"><div class="bar c-vec" style="margin-left:584px;width:52px"></div></div>
        <div class="trackrow"><div class="bar c-vec" style="margin-left:454px;width:61px"></div></div>
        <div class="trackrow"><div class="bar c-vec" style="margin-left:331px;width:400px"></div></div>
        <div class="trackrow"><div class="bar c-vec" style="margin-left:305px;width:426px"></div></div>
        <div class="trackrow"><div class="bar c-vec" style="margin-left:232px;width:499px"></div></div>
        <div class="trackrow"><div class="bar c-vec" style="margin-left:163px;width:568px"></div></div>
        <div class="trackrow"><div class="bar c-tan" style="margin-left:4px;width:722px"><div class="barhi" style="width:144px"></div></div></div>
        <div class="trackrow"><div class="bar c-red" style="margin-left:4px;width:721px"></div></div>
        <div class="trackrow"><div class="bar c-vec" style="margin-left:4px;width:721px"></div></div>
        <div class="trackrow"><div class="bar c-grn" style="margin-left:4px;width:727px"></div></div>
      </div>
      <div class="zoombar"><svg class="mt1"><use href="#mtn"/></svg><i class="slider"><i></i></i><svg class="mt2"><use href="#mtn"/></svg></div>
      <i class="phead-mark"></i><i class="pline"></i><i class="side-ic"></i>
    </div>
  </div>
</section>
</div>
</body>
</html>
```

FILE: styles.css
```css
*{box-sizing:border-box}
html,body{margin:0;padding:0;height:729px;overflow:hidden;background:#101010}
body{font:9px/1.2 "Liberation Sans","Noto Sans CJK SC",sans-serif;color:#a4a4a4}
p{margin:0}
i,em,b{font-style:normal;display:block}
.defs{position:absolute;width:0;height:0}
svg{display:block;flex:none;color:#c8c8c8}
.blue{color:#4d97e8}
.menu{font-size:12px;color:#b5b5b5;line-height:1}
.flex1{flex:1}
.app{width:1280px;height:729px;display:flex;flex-direction:column;background:linear-gradient(#101010 727px,#8a8a8a 727px,#8a8a8a 728px,#101010 728px)}

.titlebar{height:12px;flex:none;background:linear-gradient(#dcdcdc,#b4b4b4);display:flex;align-items:center;justify-content:center;position:relative;color:#333;overflow:hidden}
.lights{position:absolute;left:4px;top:2px;display:flex;gap:5px}
.l{width:9px;height:9px;border-radius:50%}
.l.r{background:#ef5b52}.l.y{background:#f3bd3f}.l.g{background:#5fc454}
.title{font-size:9px;white-space:nowrap;line-height:12px}

.toolbar{height:20px;flex:none;display:flex;align-items:center;background:#262626;padding-left:9px;border-bottom:1px solid #111}
.tool{width:19px;height:17px;display:flex;align-items:center;justify-content:center;flex:none}
.tool svg{width:14px;height:14px}
.tool.on{background:#151515;border-radius:2px}
.m5{margin-left:5px}.m6{margin-left:6px}.m33{margin-left:33px}
.ax{width:18px}
.ttext{font:bold 15px "Liberation Serif",serif;color:#c8c8c8}
.snapchk{display:flex;align-items:center;gap:3px;margin-left:10px;font-size:10px;width:41px}
.cb{width:11px;height:11px;background:#6a6a6a;border-radius:2px;color:#e8e8e8;font-size:9px;line-height:11px;text-align:center}
.snapa{margin-left:12px}
.workspaces{display:flex;align-items:center;height:19px;border-left:1px solid #1a1a1a;width:289px;padding-left:18px;font-size:9.500px;color:#a6a6a6;border-right:1px solid #1a1a1a}
.ws.w1,.ws.w2,.ws.w3{width:51px}
.ws.w4{width:36px;color:#5aa2ee}
.menu.blue{color:#4a7fc4;width:25px}
.ws.w5{width:41px}
.more{font-size:13px;line-height:14px;color:#c8c8c8}
.rp{width:24px}
.helpbox{display:flex;align-items:center;width:148px;height:15px;background:#141414;margin:0 3px 0 5px;gap:8px;padding-left:4px;color:#c4c4c4;font-size:9.500px;border-radius:2px}
.helpbox svg{width:10px;height:10px}

.main{height:357px;flex:none;display:flex;gap:2px;background:#111}
.project{width:246px;flex:none;background:#262626;display:flex;flex-direction:column}
.phead{height:28px;flex:none;display:flex;align-items:center;gap:8px;padding-left:10px;color:#c0c0c0;font-size:9.500px}
.pinfo{display:flex;margin:6px 0 0 5px;height:50px;flex:none}
.thumb{width:57px;height:50px;background:#000}
.thumb svg{width:57px;height:50px}
.pmeta{margin-left:4px;font-size:8.500px;line-height:10px}
.m1 b{display:inline;color:#c8c8c8}
.m3{margin-top:9px}
.psearch{margin:32px 5px 0 6px;height:14px;background:#151515;flex:none;display:flex;align-items:center;padding-left:3px}
.psearch svg,.tsearch svg{width:10px;height:10px}
.dn{width:0;height:0;border:2px solid transparent;border-top:3px solid #bbb;margin-top:3px}
.pcols{height:16px;margin-top:5px;flex:none;display:flex;align-items:center;background:#2c2c2c;border-top:1px solid #161616;border-bottom:1px solid #161616;font-size:9.500px}
.pc1{margin-left:17px;width:108px}
.uptri{width:0;height:0;border:5px solid transparent;border-top:0;border-bottom:4px solid #4d97e8;flex:none}
.ptag{width:10px;height:10px;margin-left:6px}
.pc2{margin-left:7px;width:59px}
.pbody{flex:1;display:flex;min-height:0;overflow:hidden}
.plist{width:232px;flex:none}
.prow{height:14.500px;display:flex;align-items:center;background:#2a2a2a;border-bottom:1px solid #1e1e1e}
.pname{width:142px;flex:none;display:flex;align-items:center;padding-left:14px;white-space:nowrap;position:relative}
.pname.in{padding-left:29px}
.ci{width:13px;height:11px;margin-right:2px}
.cin{margin-left:-1px}
.ic{width:10px;height:12px;margin-right:4px}
.fchev{width:8px;height:8px;position:absolute;left:4px;top:3px}
.lab{width:8px;height:8px;flex:none;border:1px solid #181818;box-sizing:content-box}
.lab.tan{background:#b2a588}.lab.yel{background:#e8df5c}.lab.vec{background:#b1b1d9}
.ptype{margin-left:7px;width:59px;flex:none}
.psize{font-size:8.500px}
.sel-row{background:#393939}
.edit{background:#a4a4a4;color:#1a1a1a;width:96px;height:14px;line-height:14px;padding-left:2px;margin-left:-2px;font-size:9.500px}
.pscroll{flex:1;background:#262626;padding-top:1px}
.netic{width:11px;height:10px;margin-top:1px}
.thumbbar{width:11px;height:110px;background:#3a3a3a;border-radius:6px;margin-top:34px}
.pfoot{height:15px;flex:none;display:flex;align-items:center;padding:0 0 2px 5px;gap:7px;background:#262626;border-top:1px solid #161616}
.fi{width:11px;height:11px}
.bpc{background:#1e1e1e;width:32px;text-align:center;margin-left:1px;font-size:8px;line-height:11px}
.trash{margin-left:-2px}
.pill{width:30px;height:10px;border-radius:6px;background:#3a3a3a;margin-left:-3px}

.center{width:865px;flex:none;background:#262626;display:flex;flex-direction:column}
.ctabs{height:30px;flex:none;display:flex;align-items:center;padding:0 0 2px 7px;font-size:9.500px}
.x{color:#888;font-size:10px;width:8px}
.swatch{width:9px;height:9px;flex:none}
.swatch.tan{background:#b2a588}
.ctabs .swatch{margin-left:5px}
.clock{width:9px;height:9px;margin-left:7px}
.ctab{margin-left:7px;margin-right:5px}
.crumbs{height:19px;flex:none;display:flex;align-items:center;padding:0 7px 0 15px;border-bottom:2px solid #1a1a1a;font-size:9.500px}
.crumb{background:#171717;width:80px;height:14px;line-height:14px;padding:0 3px 0 6px;display:flex;justify-content:space-between;font-size:8.500px}
.crumb2{margin-left:8px}
.renderer{background:#1d1d1d;margin-left:2px;width:45px;height:14px;line-height:14px;text-align:center;font-size:8.500px}
.viewer{flex:1;background:#212121;min-height:0;position:relative;padding-top:9px}
.vlabel{margin-left:8px;color:#d8d8d8;font-weight:bold;font-size:8.500px;height:10px;line-height:10px}
.comp{width:366px;height:206px;background:#fff;margin:45px 0 0 167px;position:relative}
.comp svg{width:366px;height:206px}
.hmark{position:absolute;left:319px;top:178px;font:11.500px "Liberation Serif",serif;color:#1e3a80}
.vbar{height:20px;flex:none;display:flex;align-items:center;background:#262626;border-top:1px solid #161616;padding-left:1px}
.vi{width:12px;height:12px;margin-right:4px}
.vi.a1{margin-left:3px}
.vi.a3{margin-left:1px}
.vi.a4{margin-left:5px}
.vi.a5{margin-left:2px}
.vi.a6{margin-left:4px}
.vi.on{background:#141414}
.vi.dim{opacity:.35}
.vsel{background:#1d1d1d;height:14px;line-height:14px;padding-left:5px;position:relative;font-size:9px;flex:none;color:#b0b0b0}
.vsel::after,.sel::after,.ccsel::after{content:"";position:absolute;right:5px;top:3px;width:4px;height:4px;border-right:1px solid #b8b8b8;border-bottom:1px solid #b8b8b8;transform:rotate(45deg)}
.v50{width:51px;margin-right:3px}
.vtime{background:#1d1d1d;width:52px;height:14px;line-height:14px;text-align:center;margin-right:2px;font-size:8.500px}
.vq{width:66px}
.vc{width:81px}
.vv{width:53px;margin-left:3px}
.exp{font-size:8.500px}

.right{flex:1;background:#262626;display:flex;min-width:0}
.rlist{width:156px;flex:none;display:flex;flex-direction:column}
.rrow{height:32px;line-height:30px;padding-left:8px;border-bottom:2px solid #1a1a1a;font-size:9.500px;flex:none;color:#a8a8a8}
.rscroll{flex:1;padding-right:3px}
.rscroll i{width:7px;height:320px;background:#333;border-radius:4px}
.char{flex:1;padding-left:3px;min-height:0}
.charhead{height:32px;display:flex;align-items:center;justify-content:space-between;padding:0 3px 0 6px;color:#c0c0c0;font-size:9.500px}
.fontrow{display:flex;height:35px;margin-top:6px}
.fontsel{width:93px;display:flex;flex-direction:column;gap:4px}
.fs{height:14px;background:#161616;line-height:14px;padding-left:5px;color:#d0d0d0;position:relative;font-size:9px}
.fs::after{content:"";position:absolute;right:5px;top:3px;width:4px;height:4px;border-right:1px solid #bbb;border-bottom:1px solid #bbb;transform:rotate(45deg)}
.dropper{width:14px;height:14px;margin:2px 0 0 3px}
.swatches{position:relative;width:36px;height:34px;margin-left:5px;top:-2px}
.mini{position:absolute;left:-19px;top:20px;width:15px;height:14px;background:linear-gradient(#0b1a3a 50%,#fff 50%);border:1px solid #ddd}
.fill{position:absolute;left:0;top:0;width:23px;height:23px;background:#12307a;border:1px solid #000}
.stroke{position:absolute;left:10px;top:10px;width:22px;height:23px;background:linear-gradient(135deg,#fff 0 46%,#d83030 46% 54%,#fff 54%);transform:scaleX(-1)}
.nostroke{position:absolute;top:23px;height:10px;background:linear-gradient(135deg,#fff 0 44%,#d83030 44% 56%,#fff 56%);transform:scaleX(-1)}
.n1{left:0;width:8px}
.n2{left:10px;width:7px}
.swap{position:absolute;left:25px;top:-1px;color:#ddd;font-size:9px}
.cgrid{display:grid;grid-template-columns:80px 70px;align-content:start;border-top:1px solid #333;font-size:9px}
.g1{margin-top:2px;padding-top:2px;height:36px}
.g2{height:26px;padding-top:4px}
.g3{height:41px;padding-top:1px;row-gap:2px}
.cc{display:flex;align-items:center;height:15px;gap:2px;position:relative;white-space:nowrap}
.cc svg{width:14px;height:14px;margin-right:2px}
.cc.off{color:#6c6c6c}
.big{font-size:9.500px}
.tri{position:absolute;right:12px;top:5px;width:0;height:0;border:3px solid transparent;border-top:4px solid #aaa;border-bottom:0}
.cgrid .cc:nth-child(2n) .tri{right:2px}
.ccsel{height:14px;background:#181818;position:relative}
.tstyles{display:flex;border-top:1px solid #333;padding:2px 0 0 15px;font:bold 11px "Liberation Serif",serif;color:#c8c8c8}
.tstyles span{width:20px;flex:none;text-align:center}
.tstyles .ital{font-style:italic}
.tstyles small{font-size:8px}
.tstyles sup,.tstyles sub{font-size:6px;line-height:0}

.timeline{height:335px;flex:none;margin-top:3px;background:#262626;border:1px solid #2f6cae;border-bottom:2px solid #2f6cae;display:flex;flex-direction:column;overflow:hidden}
.ttabs{height:28px;flex:none;display:flex;align-items:center;font-size:9.500px;padding-bottom:2px}
.t0{margin-left:20px;width:78px}
.t1{margin-right:7px}
.t1b{width:49px}
.tt-act{display:flex;align-items:center;height:28px;width:99px;border-bottom:2px solid #bdbdbd;gap:2px;margin-bottom:-2px}
.tt-act .swatch{margin:0 6px 0 1px}
.tt-act .t2{font-size:8.500px;width:60px;color:#c0c0c0}
.tbody{flex:1;display:flex;min-height:0}
.tleft{width:533px;flex:none;display:flex;flex-direction:column}
.tctrl{height:29px;flex:none;display:flex;align-items:center;padding-left:8px}
.ttime{width:66px;color:#4d97e8}
.ttime b{font-size:11.500px;line-height:13px}
.ttime span{font-size:7.500px;color:#3a6ea8;display:block;line-height:9px}
.tsearch{width:305px;height:14px;background:#151515;display:flex;align-items:center;padding-left:3px}
.ticons{display:flex;margin-left:11px}
.ticons svg{width:13px;height:13px}
.ticons svg:nth-child(2){margin-left:13px}
.ticons svg:nth-child(3){margin-left:12px}
.ticons svg:nth-child(4){margin-left:8px}
.ticons svg:nth-child(5){margin-left:7px}
.ticons svg:nth-child(6){margin-left:12px}
.thead{height:13px;flex:none;display:flex;align-items:center;background:#2a2a2a;border-top:1px solid #161616;border-bottom:1px solid #161616;font-size:9px}
.h svg{width:10px;height:10px}
.h{display:flex;flex:none}
.h.eye{margin-left:3px;width:11px}.h.au{width:11px}.h.so{width:11px}.h.lo{width:11px}
.h.tg{margin-left:15px;width:19px}.h.ha{width:19px;color:#777;font-size:8.500px}
.h.hn{width:100px;padding-left:5px;border-left:1px solid #555}
.h.hm{width:60px;padding-left:4px;border-left:1px solid #555}
.h.ht{margin-left:4px;width:12px;color:#777}
.h.hk{width:54px;color:#777;font-size:8.500px}
.h.hs{width:102px;gap:1.500px}
.h.hs .fx{width:10px}
.h.hp{padding-left:4px;border-left:1px solid #555;width:89px;border-right:1px solid #555}
.dot{width:6px;height:6px;border-radius:50%;background:#ccc;margin:2px}
.fx{font:italic 10px "Liberation Serif",serif;color:#c0c0c0;line-height:11px}

.lay{height:15.330px;flex:none;display:flex;align-items:center;background:#2e2e2e;border-bottom:1px solid #1f1f1f;color:#a8a8a8}
.c1{width:15px;display:flex;justify-content:center;flex:none}
.c1 svg{width:11px;height:11px}
.c2{width:11px;height:12px;flex:none}
.bx{width:10px;height:12px;background:#262626;margin-right:2px;flex:none}
.bxs .bx{margin-right:1px}
.bx.hid,.tb.hid{background:none}
.bxc{background:#262626;height:12px;margin-left:3px;width:10px;margin-right:2px}
.spk{width:11px;height:10px}
.chev{width:9px;height:9px;margin:0 1px 0 5px;color:#b0b0b0}
.lb{width:12px;height:12px;flex:none}
.lb.red{background:#b44040}.lb.vec{background:#b1b1d9}.lb.tan{background:#b2a588}.lb.grn{background:#bcd0b8}
.num{width:26px;padding-left:4px;font-size:9px;color:#a8a8a8}
.src{width:11px;height:13px;margin-left:2px;margin-right:4px;flex:none}
.tglyph{font:12px/13px "Liberation Serif",serif;color:#c8c8c8;text-align:center}
.solid{background:#222;border:1px solid #111}
.nm{width:84px;flex:none;font-weight:bold;font-size:8.500px;white-space:nowrap;overflow:hidden;color:#a2a2a2}
.sel{background:#191919;height:13px;line-height:13px;padding-left:5px;position:relative;color:#d2d2d2;flex:none;font-size:9.500px}
.md{width:52px;flex:none}
.tb{width:11px;height:12px;background:#262626;margin:0 5px 0 4px;flex:none}
.trk{width:49px;flex:none}
.sws{display:flex;margin-left:5px;width:44px;flex:none;align-items:center}
.s{width:11px;height:12px;flex:none}
svg.s{padding:1px;width:11px;height:11px}
.s.bg{background:#262626}
.fx.s{background:#262626;text-align:center;line-height:12px}
.dimg{color:#777;background:#262626}
.bxs{display:flex;margin-left:14px;width:33px;flex:none}
svg.bx{padding:1px;color:#c8c8c8}
.sp{width:11px;height:11px;margin:0 5px 0 13px;flex:none}
.pr{width:67px}
.sub{background:#262626}
.stp{width:10px;height:10px;margin-left:99px}
.subn{margin-left:4px;width:219px;flex:none}
.subv{font:8px "Liberation Serif",serif;color:#4d97e8;width:113px;flex:none}
.sp2{width:11px;height:11px}
.tfoot{flex:1;display:flex;align-items:center;gap:3px;padding-left:5px;border-top:2px solid #161616;margin-top:2px}
.tfoot svg{width:11px;height:11px}

.tright{flex:1;min-width:0;position:relative;border-left:1px solid #151515}
.nav{height:9px;margin-top:5px;display:flex;width:731px;background:#111;padding:1px 0}
.cap{width:4px;background:#4d90e8;flex:none;border-radius:3px 0 0 3px}
.cap:nth-child(3){border-radius:0 3px 3px 0}
.navline{flex:1;background:#6c6c6c}
.ruler{height:14px;display:flex;padding-left:4px;width:760px}
.mk{width:72.100px;flex:none;position:relative;font:7.500px/9px "Liberation Serif",serif;color:#9a9a9a}
.mk b{position:absolute;left:0;top:1px;transform:translateX(-50%);font-weight:normal;white-space:nowrap}
.mk::after{content:"";position:absolute;left:0;top:10px;height:4px;border-left:1px solid #888}
.work{height:13px;display:flex;width:731px;background:#111;padding:1px 0;position:relative}
.workfill{flex:1;background:#646464}
.shield{position:absolute;left:733px;top:1px;width:9px;height:11px;background:#c0c0c0;clip-path:polygon(0 0,100% 0,100% 60%,50% 100%,0 60%)}
.green{height:2px;width:721px;margin-left:4px;background:#4bc23e}
.tracks{width:731px}
.trackrow{height:15.330px;background:#373737;border-bottom:1px solid #222;padding-top:1px}
.bar{height:12.500px;box-shadow:inset 0 1px #ffffff18}
.c-red{background:#6f3f3e}
.c-vec{background:#71707f}
.c-tan{background:#4a4840}
.c-grn{background:#75806f}
.barhi{height:100%;background:#6e6857}
.zoombar{height:14px;margin-top:2px;display:flex;align-items:center;padding-left:3px;background:#262626}
.mt1{width:9px;height:6px}
.mt2{width:13px;height:8px;margin-left:8px}
.slider{width:40px;height:1px;background:#666;margin-left:4px;position:relative}
.slider i{position:absolute;left:5px;top:-3px;width:5px;height:7px;border:1px solid #ccc;border-radius:3px;background:#262626}
.phead-mark{position:absolute;left:136px;top:15px;width:9px;height:11px;background:#4d90e8;clip-path:polygon(0 0,100% 0,100% 50%,50% 100%,0 50%)}
.pline{position:absolute;left:140px;top:5px;width:1px;height:285px;background:#4a8ad4}
.side-ic{position:absolute;left:732px;top:44px;width:9px;height:9px;background:#d0d0d0;clip-path:polygon(0 50%,50% 0,100% 0,100% 100%,50% 100%)}
```
